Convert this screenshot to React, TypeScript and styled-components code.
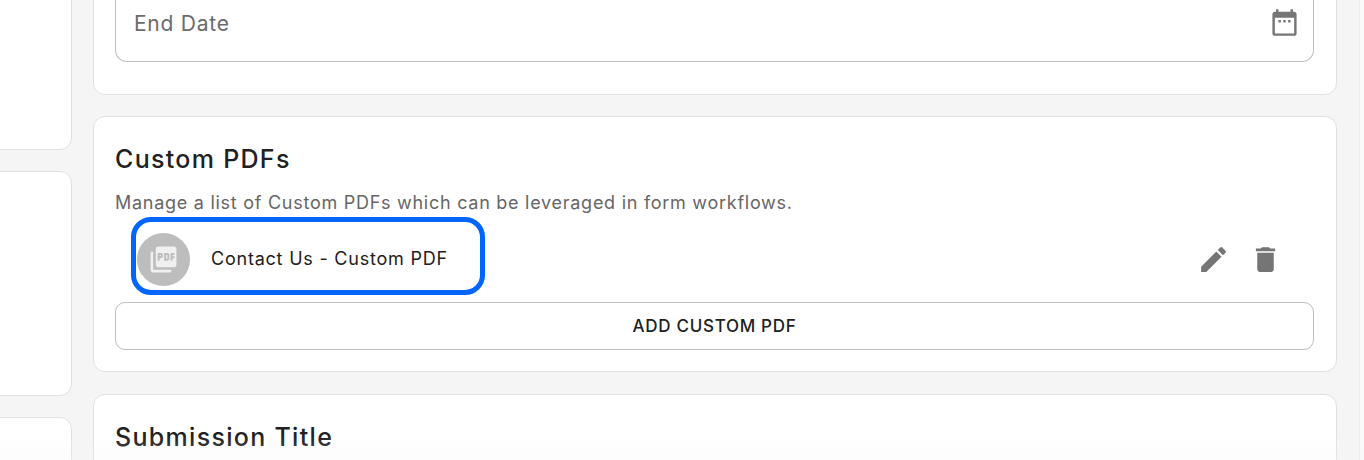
import React from "react";
import styled, { createGlobalStyle } from "styled-components";

const Global = createGlobalStyle`
  html, body { margin: 0; padding: 0; background: #f5f5f5; height: 460px; overflow: hidden; }
  body { font-family: "Inter", "Liberation Sans", sans-serif; color: #212121; }
`;
const Page = styled.div`
  position: relative;
  display: grid;
  grid-template-columns: 72px 1244px 1fr;
  column-gap: 21px;
  height: 460px;
  overflow: hidden;
  align-items: start;
`;
const BottomFade = styled.div`
  position: absolute;
  left: 0;
  right: 0;
  bottom: 0;
  height: 24px;
  background: linear-gradient(to bottom, rgba(245, 245, 245, 0), rgba(245, 245, 245, 0.25));
`;
const Column = styled.div`
  display: flex;
  flex-direction: column;
  gap: 21px;
`;
const ScrollTrack = styled.div`
  justify-self: end;
  box-sizing: border-box;
  width: 5px;
  height: 460px;
  background: #fafafa;
  border-left: 1px solid #ececec;
`;
const Card = styled.section<{ $h?: number }>`
  box-sizing: border-box;
  background: #fff;
  border: 1px solid #e0e0e0;
  border-radius: 12px;
  padding: 21px 22px 21px 21px;
  ${(p) => (p.$h ? `height: ${p.$h}px;` : "")}
`;
const SideCard = styled(Card)`
  margin-left: -30px;
`;
const TopSideCard = styled(SideCard)`
  margin-top: -60px;
`;
const TopCard = styled(Card)`
  margin-top: -60px;
  padding-top: 0;
`;
const LastCard = styled(Card)`
  margin-top: 1px;
`;
const DateField = styled.div`
  box-sizing: border-box;
  height: 121px;
  display: flex;
  align-items: flex-end;
  justify-content: space-between;
  padding: 0 14px 24px 18px;
  border: 1px solid #bdbdbd;
  border-top: none;
  border-radius: 0 0 12px 12px;
  font-size: 21px;
  letter-spacing: 0.75px;
  color: #6b6b6b;
`;
const DateLabel = styled.span`
  line-height: 27px;
`;
const Title = styled.h2`
  margin: 0;
  padding-top: 3px;
  font-size: 25px;
  line-height: 36px;
  font-weight: 500;
  letter-spacing: 1.3px;
  color: #212121;
`;
const Description = styled.p`
  margin: 14px 0 0;
  font-size: 18px;
  line-height: 24px;
  letter-spacing: 0.73px;
  color: #666;
`;
const ListRow = styled.div`
  display: flex;
  align-items: center;
  justify-content: space-between;
  margin-top: 2px;
  height: 78px;
  padding-left: 22px;
`;
const Chip = styled.div`
  box-sizing: border-box;
  display: flex;
  align-items: center;
  gap: 21px;
  width: 354px;
  height: 78px;
  margin-left: -6px;
  padding: 4px 0 0 1px;
  border: 5px solid #0066ff;
  border-radius: 20px;
  font-size: 18px;
  letter-spacing: 0.78px;
  color: #212121;
`;
const Avatar = styled.div`
  width: 53px;
  height: 53px;
  margin-top: 2px;
  border-radius: 50%;
  background: #bdbdbd;
  display: flex;
  align-items: center;
  justify-content: center;
  flex: none;
`;
const Actions = styled.div`
  display: flex;
  align-items: center;
  gap: 19px;
  padding: 6px 32px 0 0;
`;
const IconButton = styled.span<{ $size: number }>`
  display: flex;
  width: ${(p) => p.$size}px;
  height: ${(p) => p.$size}px;
  color: #757575;
`;
const AddButton = styled.button`
  display: block;
  box-sizing: border-box;
  width: 100%;
  height: 48px;
  margin-top: 7px;
  padding: 0;
  background: #fff;
  border: 1px solid #bdbdbd;
  border-radius: 10px;
  font-family: inherit;
  font-size: 17px;
  font-weight: 500;
  letter-spacing: 0.7px;
  color: #212121;
`;

export default function App() {
  return (
    <>
      <Global />
      <Page>
        <Column>
          <TopSideCard $h={210} />
          <SideCard $h={225} />
          <SideCard $h={120} />
        </Column>
        <Column>
          <TopCard $h={155}>
            <DateField>
              <DateLabel>End Date</DateLabel>
              <IconButton $size={29}>
                <svg width="29" height="29" viewBox="0 0 24 24" fill="#757575">
                  <path d="M20 3h-1V1h-2v2H7V1H5v2H4c-1.100 0-2 .9-2 2v16c0 1.100.9 2 2 2h16c1.100 0 2-.9 2-2V5c0-1.100-.9-2-2-2zm0 18H4V8h16v13zM7 10h2v2H7zm4 0h2v2h-2zm4 0h2v2h-2z" />
                </svg>
              </IconButton>
            </DateField>
          </TopCard>
          <Card $h={256}>
            <Title>Custom PDFs</Title>
            <Description>Manage a list of Custom PDFs which can be leveraged in form workflows.</Description>
            <ListRow>
              <Chip>
                <Avatar>
                  <svg width="31" height="31" viewBox="0 0 24 24" fill="#f0f0f0">
                    <path d="M20 2H8c-1.100 0-2 .9-2 2v12c0 1.100.9 2 2 2h12c1.100 0 2-.9 2-2V4c0-1.100-.9-2-2-2zm-8.500 7.500c0 .83-.67 1.500-1.500 1.500H9v2H7.500V7H10c.83 0 1.500.67 1.500 1.500v1zm5 2c0 .83-.67 1.500-1.500 1.500h-2.500V7H15c.83 0 1.500.67 1.500 1.500v3zm4-3H19v1h1.500V11H19v2h-1.500V7h3v1.500zM9 9.500h1v-1H9v1zM4 6H2v14c0 1.100.9 2 2 2h14v-2H4V6zm10 5.500h1v-3h-1v3z" />
                  </svg>
                </Avatar>
                Contact Us - Custom PDF
              </Chip>
              <Actions>
                <IconButton $size={33}>
                  <svg width="33" height="33" viewBox="0 0 24 24" fill="currentColor">
                    <path d="M3 17.250V21h3.750L17.810 9.940l-3.750-3.750L3 17.250zM20.710 7.040a.996.996 0 0 0 0-1.410l-2.340-2.340a.996.996 0 0 0-1.410 0l-1.830 1.830 3.750 3.750 1.830-1.830z" />
                  </svg>
                </IconButton>
                <IconButton $size={33}>
                  <svg width="33" height="33" viewBox="0 0 24 24" fill="currentColor">
                    <path d="M6 19c0 1.100.9 2 2 2h8c1.100 0 2-.9 2-2V7H6v12zM19 4h-3.500l-1-1h-5l-1 1H5v2h14V4z" />
                  </svg>
                </IconButton>
              </Actions>
            </ListRow>
            <AddButton>ADD CUSTOM PDF</AddButton>
          </Card>
          <LastCard $h={120}>
            <Title>Submission Title</Title>
          </LastCard>
        </Column>
        <ScrollTrack />
        <BottomFade />
      </Page>
    </>
  );
}
